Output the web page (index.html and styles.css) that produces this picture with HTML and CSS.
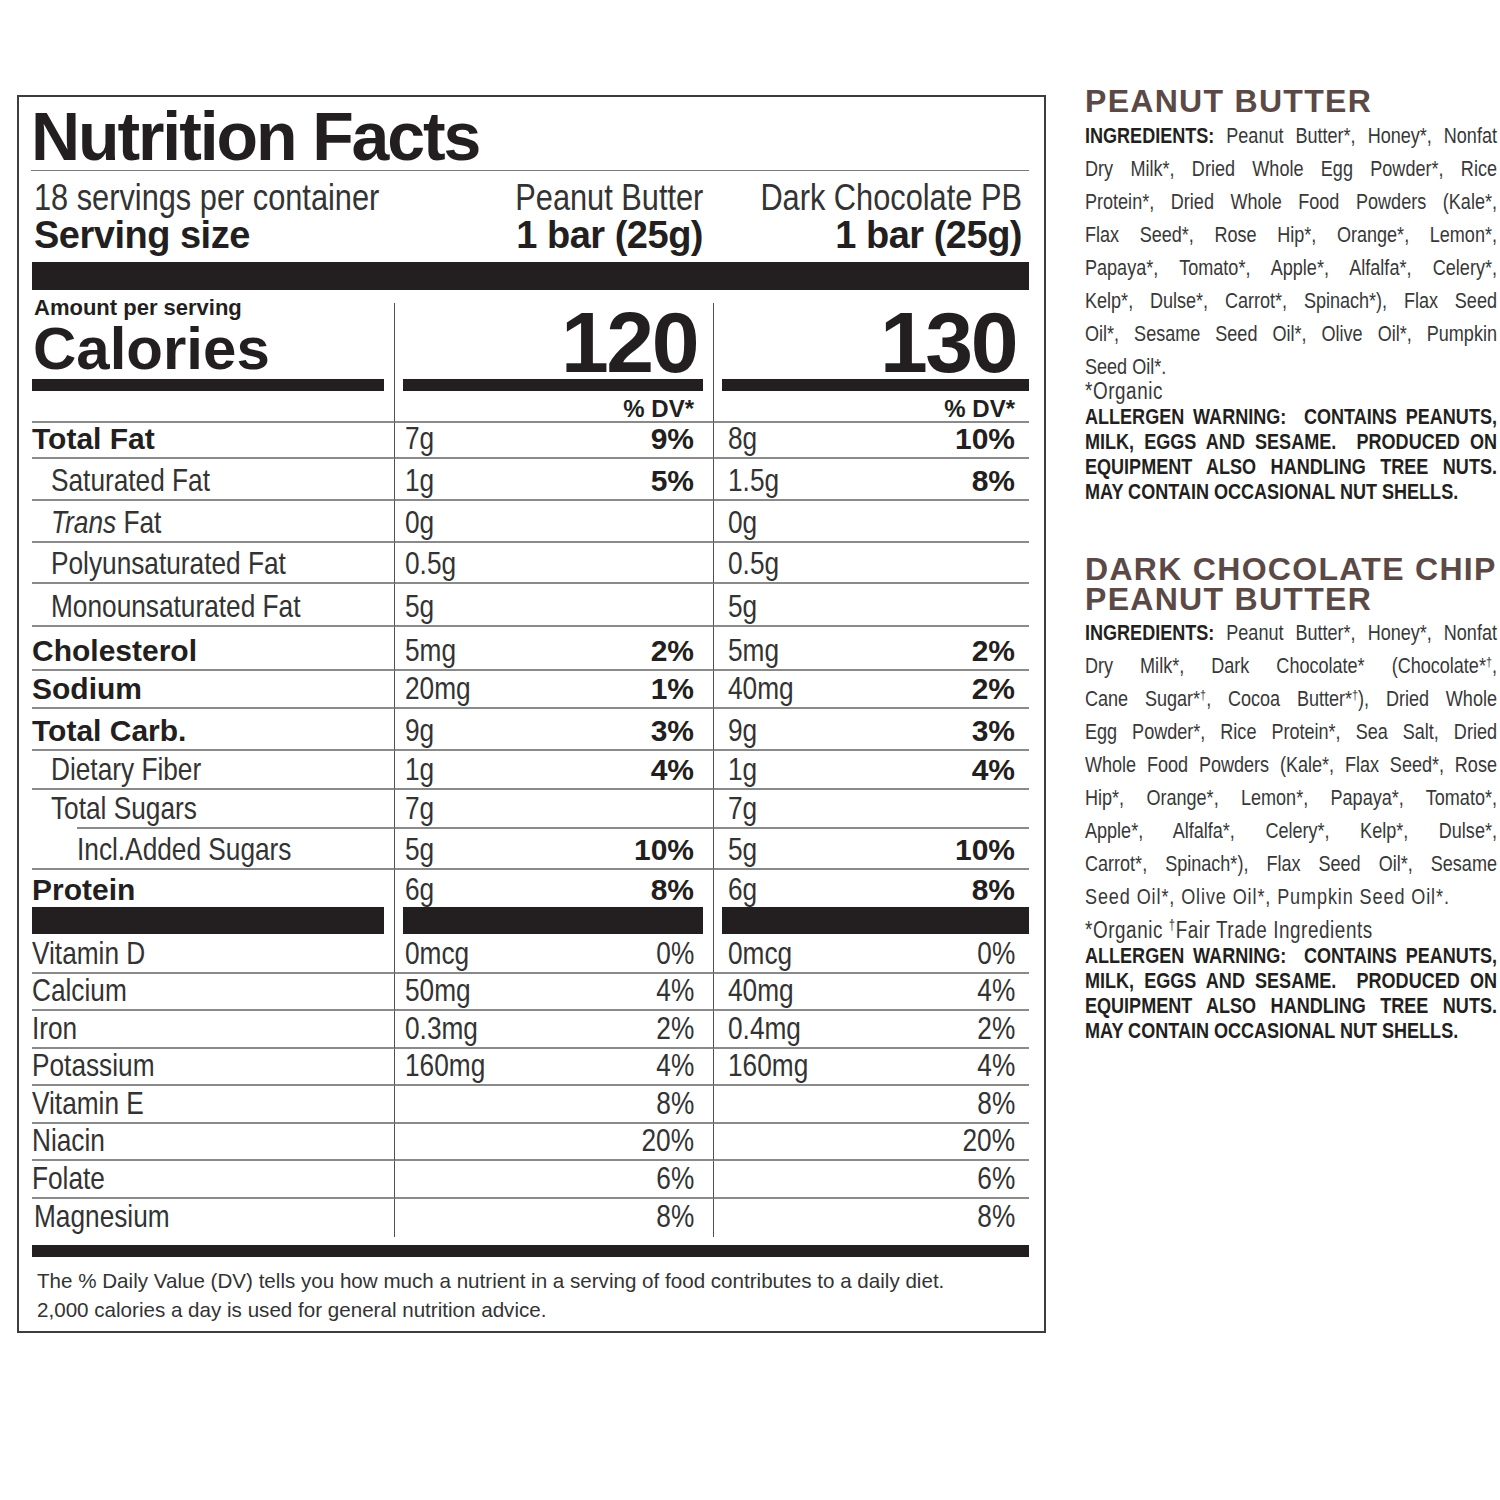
FILE: index.html
```html
<!DOCTYPE html>
<html lang="en">
<head>
<meta charset="utf-8">
<title>Nutrition Facts</title>
<link rel="stylesheet" href="styles.css">
</head>
<body>
<div class="page">
  <section class="label">
    <h1 class="title">Nutrition Facts</h1>

    <div class="serving grid3">
      <div class="hc1">
        <div class="hline"><span class="nr">18 servings per container</span></div>
        <div class="hsize">Serving size</div>
      </div>
      <div class="hc2">
        <div class="hline"><span class="nr r">Peanut Butter</span></div>
        <div class="hsize">1 bar (25g)</div>
      </div>
      <div class="hc3">
        <div class="hline"><span class="nr r">Dark Chocolate PB</span></div>
        <div class="hsize">1 bar (25g)</div>
      </div>
    </div>

    <div class="bar-thick"></div>

    <div class="cal grid3">
      <div class="calc c1">
        <div class="aps">Amount per serving</div>
        <div class="calw">Calories</div>
      </div>
      <div class="calc c2"><div class="calnum">120</div></div>
      <div class="calc c3"><div class="calnum">130</div></div>
    </div>

    <div class="nut grid3">
      <div class="n"></div>
      <div class="v c2"><span class="dv">% DV*</span></div>
      <div class="v c3"><span class="dv">% DV*</span></div>

      <div class="n b">Total Fat</div>
      <div class="v c2"><span class="nr">7g</span><span class="pct">9%</span></div>
      <div class="v c3"><span class="nr">8g</span><span class="pct">10%</span></div>

      <div class="n i1"><span class="nr">Saturated Fat</span></div>
      <div class="v c2"><span class="nr">1g</span><span class="pct">5%</span></div>
      <div class="v c3"><span class="nr">1.5g</span><span class="pct">8%</span></div>

      <div class="n i1"><span class="nr"><span class="it">Trans</span> Fat</span></div>
      <div class="v c2"><span class="nr">0g</span></div>
      <div class="v c3"><span class="nr">0g</span></div>

      <div class="n i1"><span class="nr">Polyunsaturated Fat</span></div>
      <div class="v c2"><span class="nr">0.5g</span></div>
      <div class="v c3"><span class="nr">0.5g</span></div>

      <div class="n i1"><span class="nr">Monounsaturated Fat</span></div>
      <div class="v c2"><span class="nr">5g</span></div>
      <div class="v c3"><span class="nr">5g</span></div>

      <div class="n b">Cholesterol</div>
      <div class="v c2"><span class="nr">5mg</span><span class="pct">2%</span></div>
      <div class="v c3"><span class="nr">5mg</span><span class="pct">2%</span></div>

      <div class="n b">Sodium</div>
      <div class="v c2"><span class="nr">20mg</span><span class="pct">1%</span></div>
      <div class="v c3"><span class="nr">40mg</span><span class="pct">2%</span></div>

      <div class="n b">Total Carb.</div>
      <div class="v c2"><span class="nr">9g</span><span class="pct">3%</span></div>
      <div class="v c3"><span class="nr">9g</span><span class="pct">3%</span></div>

      <div class="n i1"><span class="nr">Dietary Fiber</span></div>
      <div class="v c2"><span class="nr">1g</span><span class="pct">4%</span></div>
      <div class="v c3"><span class="nr">1g</span><span class="pct">4%</span></div>

      <div class="n i1 partial"><span class="nr">Total Sugars</span></div>
      <div class="v c2"><span class="nr">7g</span></div>
      <div class="v c3"><span class="nr">7g</span></div>

      <div class="n i2"><span class="nr">Incl.Added Sugars</span></div>
      <div class="v c2"><span class="nr">5g</span><span class="pct">10%</span></div>
      <div class="v c3"><span class="nr">5g</span><span class="pct">10%</span></div>

      <div class="n b last">Protein</div>
      <div class="v c2 last"><span class="nr">6g</span><span class="pct">8%</span></div>
      <div class="v c3 last"><span class="nr">6g</span><span class="pct">8%</span></div>
    </div>

    <div class="vbar grid3">
      <div class="vb1"><div class="blk"></div></div>
      <div class="vb2 c2"><div class="blk"></div></div>
      <div class="vb3 c3"><div class="blk"></div></div>
    </div>

    <div class="vit grid3">
      <div class="n"><span class="nr">Vitamin D</span></div>
      <div class="v c2"><span class="nr">0mcg</span><span class="nr r vp">0%</span></div>
      <div class="v c3"><span class="nr">0mcg</span><span class="nr r vp">0%</span></div>

      <div class="n"><span class="nr">Calcium</span></div>
      <div class="v c2"><span class="nr">50mg</span><span class="nr r vp">4%</span></div>
      <div class="v c3"><span class="nr">40mg</span><span class="nr r vp">4%</span></div>

      <div class="n"><span class="nr">Iron</span></div>
      <div class="v c2"><span class="nr">0.3mg</span><span class="nr r vp">2%</span></div>
      <div class="v c3"><span class="nr">0.4mg</span><span class="nr r vp">2%</span></div>

      <div class="n"><span class="nr">Potassium</span></div>
      <div class="v c2"><span class="nr">160mg</span><span class="nr r vp">4%</span></div>
      <div class="v c3"><span class="nr">160mg</span><span class="nr r vp">4%</span></div>

      <div class="n"><span class="nr">Vitamin E</span></div>
      <div class="v c2"><span class="nr r vp">8%</span></div>
      <div class="v c3"><span class="nr r vp">8%</span></div>

      <div class="n"><span class="nr">Niacin</span></div>
      <div class="v c2"><span class="nr r vp">20%</span></div>
      <div class="v c3"><span class="nr r vp">20%</span></div>

      <div class="n"><span class="nr">Folate</span></div>
      <div class="v c2"><span class="nr r vp">6%</span></div>
      <div class="v c3"><span class="nr r vp">6%</span></div>

      <div class="n last mg"><span class="nr">Magnesium</span></div>
      <div class="v c2 last"><span class="nr r vp">8%</span></div>
      <div class="v c3 last"><span class="nr r vp">8%</span></div>
    </div>

    <div class="bar-bottom"></div>

    <p class="foot">The % Daily Value (DV) tells you how much a nutrient in a serving of food contributes to a daily diet.<br>2,000 calories a day is used for general nutrition advice.</p>
  </section>

  <aside class="ingr">
    <h2 class="ih">PEANUT BUTTER</h2>
    <div class="ibody">
      <div class="jl"><b class="lbl">INGREDIENTS:</b> Peanut Butter*, Honey*, Nonfat</div>
      <div class="jl">Dry Milk*, Dried Whole Egg Powder*, Rice</div>
      <div class="jl">Protein*, Dried Whole Food Powders (Kale*,</div>
      <div class="jl">Flax Seed*, Rose Hip*, Orange*, Lemon*,</div>
      <div class="jl">Papaya*, Tomato*, Apple*, Alfalfa*, Celery*,</div>
      <div class="jl">Kelp*, Dulse*, Carrot*, Spinach*), Flax Seed</div>
      <div class="jl">Oil*, Sesame Seed Oil*, Olive Oil*, Pumpkin</div>
      <div class="ll">Seed Oil*.</div>
    </div>
    <div class="note n1">*Organic</div>
    <div class="allergen">
      <div class="jl">ALLERGEN WARNING:&nbsp; CONTAINS PEANUTS,</div>
      <div class="jl">MILK, EGGS AND SESAME.&nbsp; PRODUCED ON</div>
      <div class="jl">EQUIPMENT ALSO HANDLING TREE NUTS.</div>
      <div class="ll">MAY CONTAIN OCCASIONAL NUT SHELLS.</div>
    </div>

    <h2 class="ih ih2">DARK CHOCOLATE CHIP<br>PEANUT BUTTER</h2>
    <div class="ibody">
      <div class="jl"><b class="lbl">INGREDIENTS:</b> Peanut Butter*, Honey*, Nonfat</div>
      <div class="jl">Dry Milk*, Dark Chocolate* <span class="tk">(Chocolate*<sup>†</sup>,</span></div>
      <div class="jl">Cane <span class="tk">Sugar*<sup>†</sup>,</span> Cocoa <span class="tk">Butter*<sup>†</sup>),</span> Dried Whole</div>
      <div class="jl">Egg Powder*, Rice Protein*, Sea Salt, Dried</div>
      <div class="jl">Whole Food Powders (Kale*, Flax Seed*, Rose</div>
      <div class="jl">Hip*, Orange*, Lemon*, Papaya*, Tomato*,</div>
      <div class="jl">Apple*, Alfalfa*, Celery*, Kelp*, Dulse*,</div>
      <div class="jl">Carrot*, Spinach*), Flax Seed Oil*, Sesame</div>
      <div class="ll wide">Seed Oil*, Olive Oil*, Pumpkin Seed Oil*.</div>
    </div>
    <div class="note n2">*Organic <sup>†</sup>Fair Trade Ingredients</div>
    <div class="allergen">
      <div class="jl">ALLERGEN WARNING:&nbsp; CONTAINS PEANUTS,</div>
      <div class="jl">MILK, EGGS AND SESAME.&nbsp; PRODUCED ON</div>
      <div class="jl">EQUIPMENT ALSO HANDLING TREE NUTS.</div>
      <div class="ll">MAY CONTAIN OCCASIONAL NUT SHELLS.</div>
    </div>
  </aside>
</div>
</body>
</html>
```

FILE: styles.css
```css
* { box-sizing: border-box; }

html, body {
  margin: 0;
  padding: 0;
  background: #ffffff;
}

body {
  font-family: "Liberation Sans", Arial, sans-serif;
  color: #231f20;
  overflow-x: hidden;
}

.page {
  display: flex;
  align-items: flex-start;
  gap: 39px;
  padding-left: 17px;
}

/* condensed look: Arial metrics squeezed horizontally */
.nr {
  display: inline-block;
  transform: scaleX(0.82);
  transform-origin: 0 100%;
  white-space: nowrap;
}

.nr.r { transform-origin: 100% 100%; }

/* ---------- label box ---------- */
.label {
  margin-top: 95px;
  width: 1029px;
  border: 2px solid #3d3d3d;
  padding: 5px 15px 7px 13px;
}

.title {
  margin: 0 0 0 -1px;
  height: 69px;
  font: 700 68px/68px "Liberation Sans", Arial, sans-serif;
  letter-spacing: -2.1px;
  border-bottom: 1px solid #7a7a7a;
  color: #231f20;
  white-space: nowrap;
}

.grid3 {
  display: grid;
  grid-template-columns: 362px 319px 316px;
}

.serving {
  padding: 7px 0 8px;
}

.hline {
  font: 400 37.5px/38px "Liberation Sans", Arial, sans-serif;
  color: #333333;
  white-space: nowrap;
}

.hc2 .hline,
.hc3 .hline {
  display: flex;
  justify-content: flex-end;
}

.hsize {
  font: 700 38px/38px "Liberation Sans", Arial, sans-serif;
  letter-spacing: -0.5px;
  white-space: nowrap;
}

.hc1 { padding-left: 2px; }
.hc2 { text-align: right; padding-right: 10px; }
.hc3 { text-align: right; padding-right: 7px; }

.bar-thick {
  height: 28px;
  background: #231f20;
}

/* ---------- calories ---------- */
.cal {
  padding-top: 13px;
  grid-template-rows: 88px;
}

.calc {
  display: flex;
  flex-direction: column;
  justify-content: flex-end;
}

.c2, .c3 { border-left: 1px solid #505050; }

.aps {
  font: 700 22px/22px "Liberation Sans", Arial, sans-serif;
  padding-left: 2px;
  white-space: nowrap;
}

.calw {
  font: 700 60px/60px "Liberation Sans", Arial, sans-serif;
  border-bottom: 12px solid #231f20;
  margin-right: 10px;
  padding-left: 1px;
}

.calnum {
  font: 700 86px/74px "Liberation Sans", Arial, sans-serif;
  letter-spacing: -2.5px;
  text-align: right;
  border-bottom: 12px solid #231f20;
}

.cal .c2 .calnum { margin: 0 10px 0 8px; padding-right: 6px; }
.cal .c3 .calnum { margin: 0 0 0 8px; padding-right: 13px; }

/* ---------- nutrient rows ---------- */
.nut {
  grid-template-rows: 32px 36px 42px 42px 41px 43px 44px 38px 42px 39px 39px 41px 37px;
}

.vit {
  grid-template-rows: 40px 37px 38px 37px 38px 37px 38px 38px;
}

.nut > div,
.vit > div {
  display: flex;
  align-items: flex-end;
  border-bottom: 2px solid #8a8a8a;
  padding-bottom: 3px;
  font: 400 32px/32px "Liberation Sans", Arial, sans-serif;
  color: #333333;
  white-space: nowrap;
}

.nut > div.last { border-bottom: 0; padding-bottom: 2px; }
.vit > div.last { border-bottom: 0; padding-bottom: 5px; }
.vit > div.mg { padding-left: 2px; }

.n.b {
  font: 700 30px/30px "Liberation Sans", Arial, sans-serif;
  color: #231f20;
}

.n.i1 { padding-left: 19px; }
.n.i2 { padding-left: 45px; }

.it { font-style: italic; }

.nut > div.partial {
  border-bottom: 0;
  padding-bottom: 5px;
  background-image: linear-gradient(#8a8a8a, #8a8a8a);
  background-repeat: no-repeat;
  background-size: calc(100% - 45px) 2px;
  background-position: 45px 100%;
}

.v.c2 { padding-left: 10px; padding-right: 19px; }
.v.c3 { padding-left: 14px; padding-right: 14px; }

.pct {
  margin-left: auto;
  font: 700 30px/30px "Liberation Sans", Arial, sans-serif;
  color: #231f20;
}

.vp { margin-left: auto; }

.dv {
  margin-left: auto;
  font: 700 24px/24px "Liberation Sans", Arial, sans-serif;
  color: #231f20;
}

.nut > div:nth-child(-n+3) { padding-bottom: 0; }

/* ---------- separator bar before vitamins ---------- */
.vbar { height: 27px; }

.blk {
  height: 27px;
  background: #231f20;
}

.vb1 .blk { margin-right: 10px; }
.vb2 .blk { margin: 0 10px 0 8px; }
.vb3 .blk { margin-left: 8px; }

.bar-bottom {
  margin-top: 8px;
  height: 12px;
  background: #231f20;
}

.foot {
  margin: 9px 0 0;
  padding-left: 5px;
  font: 400 20.6px/29px "Liberation Sans", Arial, sans-serif;
  color: #333333;
  white-space: nowrap;
}

/* ---------- ingredients panel ---------- */
.ingr {
  width: 412px;
  margin-top: 86px;
}

.ih {
  margin: 0;
  font: 700 32px/30px "Liberation Sans", Arial, sans-serif;
  letter-spacing: 1.3px;
  color: #5b4946;
  white-space: nowrap;
}

.ih2 { margin-top: 50px; }

.ibody {
  margin-top: 3px;
  font: 400 22px/33px "Liberation Sans", Arial, sans-serif;
  color: #383838;
}

.ih2 + .ibody { margin-top: 2px; }

.ibody > div,
.allergen > div,
.note {
  width: 502.4px;
  transform: scaleX(0.82);
  transform-origin: 0 0;
  white-space: nowrap;
}

.lbl {
  font-weight: 700;
  color: #231f20;
}

.jl {
  text-align: justify;
  text-align-last: justify;
}

.ll { text-align: left; }
.ll.wide { letter-spacing: 1.1px; }

.tk { display: inline-block; }

sup {
  font-size: 60%;
  line-height: 0;
  vertical-align: 0.55em;
}

.note {
  font: 400 23px/25px "Liberation Sans", Arial, sans-serif;
  letter-spacing: 0.7px;
  color: #383838;
}

.note.n1 { margin-top: -4px; }
.note.n2 { margin-top: 5px; }

.allergen {
  font: 700 22px/25px "Liberation Sans", Arial, sans-serif;
  color: #231f20;
}
```
